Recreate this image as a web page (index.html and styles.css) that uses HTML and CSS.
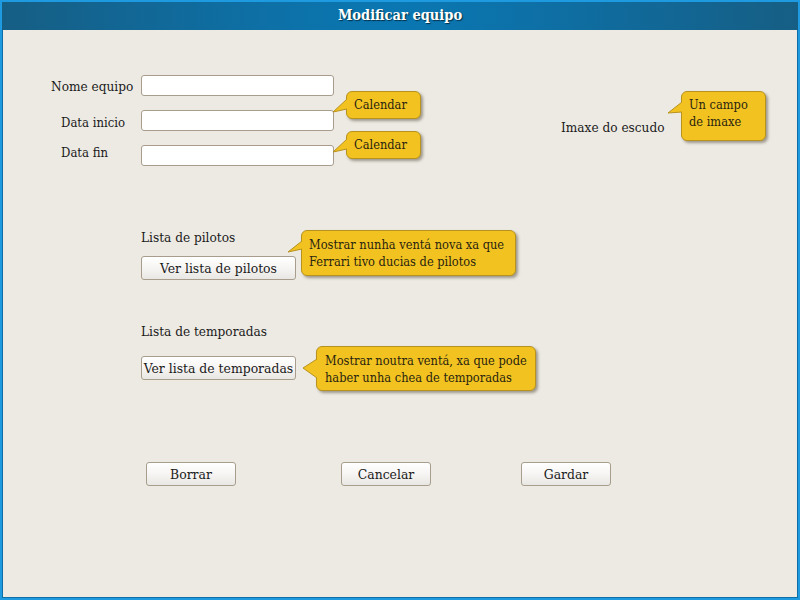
FILE: index.html
```html
<!DOCTYPE html>
<html>
<head>
<meta charset="utf-8">
<link rel="stylesheet" href="styles.css">
</head>
<body>
<div class="window">
  <div class="titlebar">Modificar equipo</div>
  <div class="content">
    <div class="top">
      <div class="fields">
        <label class="lbl lbl-name">Nome equipo</label>
        <div class="anchor"><div class="input"></div></div>
        <label class="lbl lbl-date lbl-start">Data inicio</label>
        <div class="anchor"><div class="input"></div>
          <div class="tip tip-cal">Calendar
            <svg class="tail" width="16" height="16" viewBox="0 0 16 16"><path d="M14 0 L0 13 L14 10" fill="#f2c320" stroke="#b8921e" stroke-width="1"/></svg>
          </div>
        </div>
        <label class="lbl lbl-date lbl-end">Data fin</label>
        <div class="anchor"><div class="input"></div>
          <div class="tip tip-cal tip-cal2">Calendar
            <svg class="tail" width="16" height="16" viewBox="0 0 16 16"><path d="M14 0 L0 13 L14 10" fill="#f2c320" stroke="#b8921e" stroke-width="1"/></svg>
          </div>
        </div>
      </div>
      <div class="image-field anchor">
        <span class="lbl">Imaxe do escudo</span>
        <div class="tip tip-img">Un campo<br>de imaxe
          <svg class="tail" width="16" height="16" viewBox="0 0 16 16"><path d="M14 0 L0 11 L14 10" fill="#f2c320" stroke="#b8921e" stroke-width="1"/></svg>
        </div>
      </div>
    </div>

    <div class="section sec-pilots">
      <div class="lbl sec-label">Lista de pilotos</div>
      <div class="anchor btn-anchor">
        <button class="btn btn-wide">Ver lista de pilotos</button>
        <div class="tip tip-pilots">Mostrar nunha ventá nova xa que<br>Ferrari tivo ducias de pilotos
          <svg class="tail" width="16" height="16" viewBox="0 0 16 16"><path d="M14 0 L0 11 L14 8" fill="#f2c320" stroke="#b8921e" stroke-width="1"/></svg>
        </div>
      </div>
    </div>

    <div class="section sec-seasons">
      <div class="lbl sec-label">Lista de temporadas</div>
      <div class="anchor btn-anchor">
        <button class="btn btn-wide">Ver lista de temporadas</button>
        <div class="tip tip-seasons">Mostrar noutra ventá, xa que pode<br>haber unha chea de temporadas
          <svg class="tail" width="16" height="22" viewBox="0 0 16 22"><path d="M14 0 L0 9 L14 19" fill="#f2c320" stroke="#b8921e" stroke-width="1"/></svg>
        </div>
      </div>
    </div>

    <div class="actions">
      <button class="btn btn-small">Borrar</button>
      <button class="btn btn-small btn-cancel">Cancelar</button>
      <button class="btn btn-small btn-save">Gardar</button>
    </div>
  </div>
</div>
</body>
</html>
```

FILE: styles.css
```css
* { box-sizing: border-box; }
html, body { margin: 0; padding: 0; }
body {
  width: 800px;
  height: 600px;
  overflow: hidden;
  font-family: "DejaVu Serif Condensed", "DejaVu Serif", serif;
  color: #1a1a1a;
}
.window {
  width: 800px;
  height: 600px;
  border: 2px solid #1d9ae0;
  box-shadow: inset 0 0 0 1px #0e6ea6;
  background: #edeae4;
  display: flex;
  flex-direction: column;
}
.titlebar {
  height: 28px;
  flex: none;
  background: linear-gradient(to right, #165e84 0%, #0d71a8 35%, #0a77b2 50%, #0d71a8 65%, #165e84 100%);
  color: #fff;
  font-weight: bold;
  font-size: 14.5px;
  line-height: 26px;
  text-align: center;
  text-shadow: 1px 1px 1px #04304a;
}
.content {
  flex: 1;
  position: relative;
}
.top {
  display: flex;
  padding-top: 45px;
}
.fields {
  display: grid;
  grid-template-columns: 139px 193px;
  row-gap: 14px;
  align-items: center;
}
.lbl {
  font-size: 13.5px;
  line-height: 16px;
  white-space: nowrap;
}
.lbl-name { padding-left: 49px; }
.lbl-date { padding-left: 59px; font-size: 13px; }
.lbl-start { position: relative; top: 2px; }
.lbl-end { position: relative; top: -3px; }
.anchor { position: relative; }
.input {
  height: 21px;
  background: #fff;
  border: 1px solid #a89d8c;
  border-radius: 3px;
}
.image-field {
  margin-left: 227px;
  margin-top: 42px;
  align-self: flex-start;
}
.tip {
  position: absolute;
  background: #f2c320;
  border: 1px solid #b8921e;
  border-radius: 6px;
  box-shadow: 2px 2px 3px rgba(60, 50, 30, 0.45);
  font-size: 12.7px;
  line-height: 17px;
  color: #2a2410;
  white-space: nowrap;
}
.tail {
  position: absolute;
  display: block;
  overflow: visible;
}
.tip-cal {
  left: 205px;
  top: -19px;
  width: 75px;
  height: 28px;
  padding: 4px 0 0 7px;
}
.tip-cal2 { top: -14px; }
.tip-cal .tail { left: -14px; top: 7px; }
.tip-img {
  left: 120px;
  top: -26px;
  width: 85px;
  height: 50px;
  padding: 4px 0 0 7px;
}
.tip-img .tail { left: -14px; top: 10px; }
.section {
  padding-left: 139px;
}
.sec-pilots { margin-top: 63px; }
.sec-pilots .btn-anchor { margin-top: 11px; }
.sec-seasons { margin-top: 43px; }
.sec-seasons .btn-anchor { margin-top: 17px; }
.btn-anchor { width: 155px; }
.btn {
  font-family: inherit;
  font-size: 13.8px;
  color: #1a1a1a;
  background: linear-gradient(to bottom, #ffffff 0%, #f6f5f3 50%, #e9e7e3 100%);
  border: 1px solid #a89d8c;
  border-radius: 3px;
  padding: 0;
  margin: 0;
  display: block;
}
.btn-wide { width: 155px; height: 24px; }
.tip-pilots {
  left: 160px;
  top: -26px;
  width: 215px;
  height: 46px;
  padding: 5px 0 0 7px;
}
.tip-pilots .tail { left: -14px; top: 10px; }
.tip-seasons {
  left: 175px;
  top: -10px;
  width: 220px;
  height: 45px;
  padding: 5px 0 0 8px;
}
.tip-seasons .tail { left: -14px; top: 12px; }
.actions {
  display: flex;
  padding-left: 144px;
  margin-top: 82px;
}
.btn-small { width: 90px; height: 24px; }
.btn-cancel { margin-left: 105px; }
.btn-save { margin-left: 90px; }
```
